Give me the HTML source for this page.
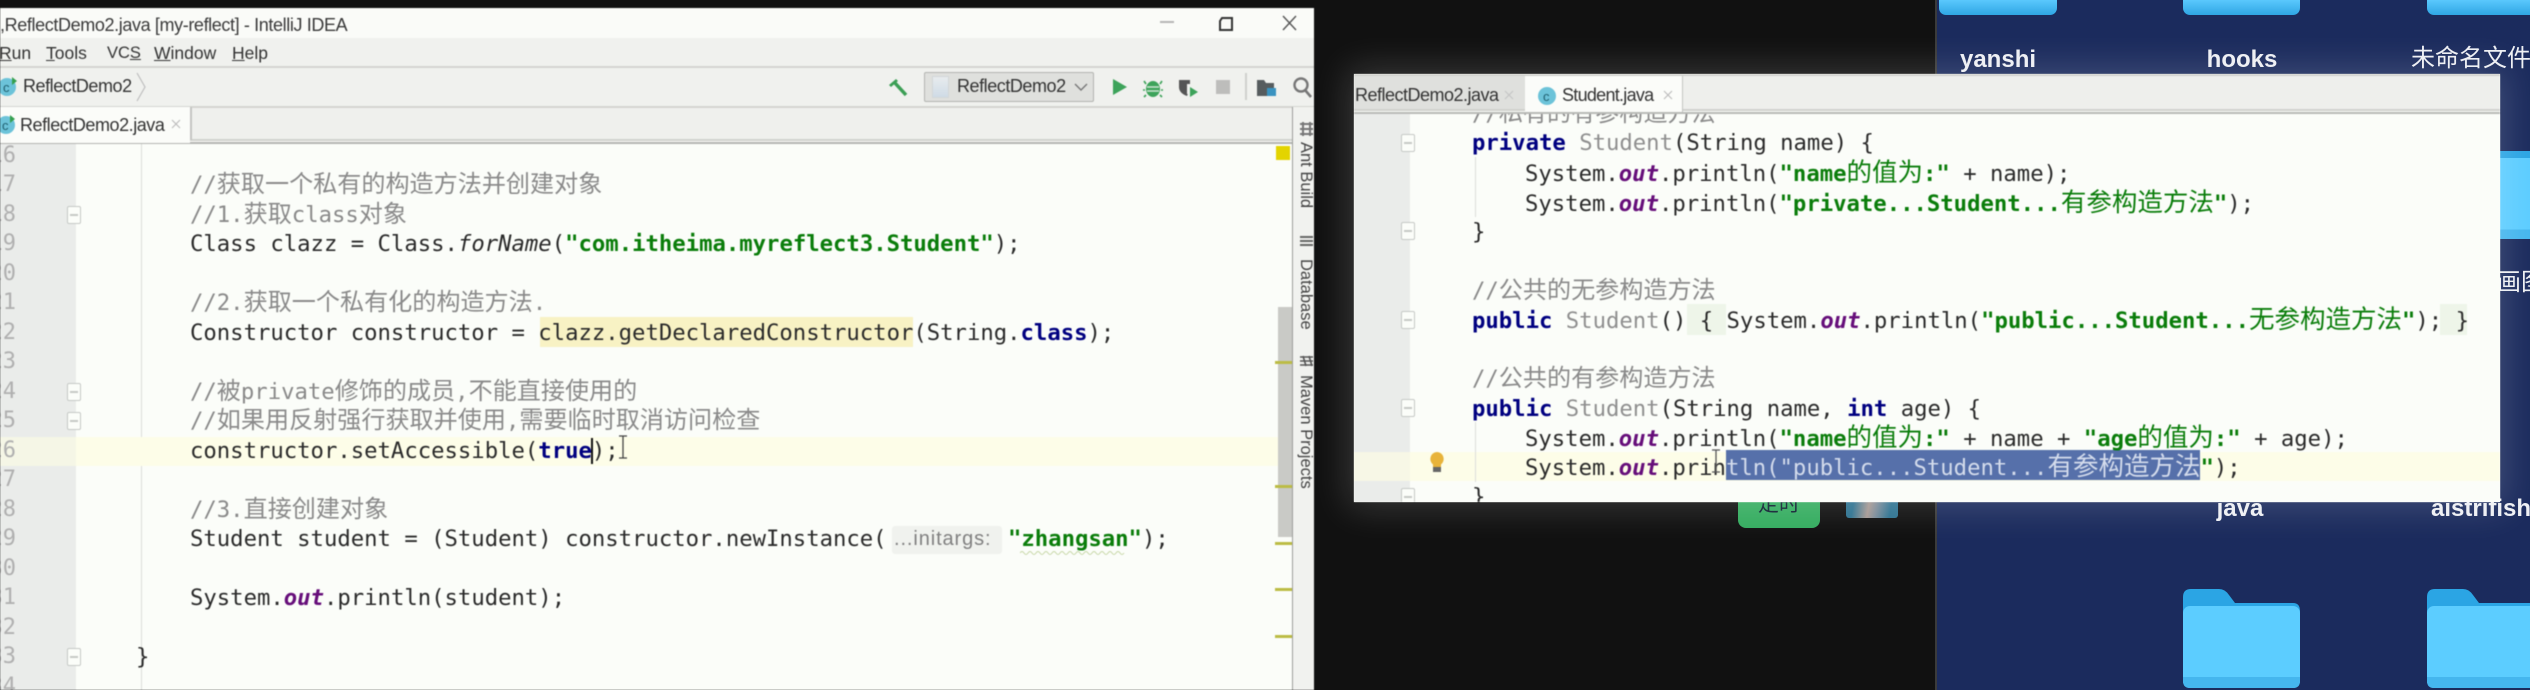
<!DOCTYPE html>
<html lang="zh"><head><meta charset="utf-8"><title>ReflectDemo2</title>
<style>
html,body{margin:0;padding:0;background:#111;width:2530px;height:690px;overflow:hidden}
*{box-sizing:border-box}
.a{position:absolute}
#stage{position:absolute;left:0;top:0;width:2530px;height:690px;overflow:hidden;background:#111}
.ui{font-family:"Liberation Sans","Noto Sans CJK SC",sans-serif;color:#333;white-space:pre}
.l{position:absolute;white-space:pre;height:30px;line-height:30px;font-family:"DejaVu Sans Mono","Noto Sans CJK SC",monospace;font-size:22.26px;color:#2a2a2a}
.l i.z,.z{font-family:"Noto Sans CJK SC",sans-serif;font-size:25.5px;line-height:1;font-style:normal;font-weight:normal}
.l.cm i.z{font-size:24.1px}
.cm{color:#8a8a8a}
.k{color:#000080;font-weight:bold}
.s{color:#0a7d0a;font-weight:bold}
.o{color:#660e7a;font-weight:bold;font-style:italic}
.g{color:#8f8f8f}
.it{font-style:italic}
.n{position:absolute;left:-24px;width:40px;text-align:right;height:30px;line-height:30px;font-family:"DejaVu Sans Mono",monospace;font-size:22px;color:#b0b0b0}
.f{position:absolute;width:14px;height:18px;border:1.5px solid #c6c9c6;background:#fbfdf9;border-radius:2px}
.f:after{content:"";position:absolute;left:2px;right:2px;top:7px;height:1.5px;background:#c6c9c6}
.lbl{position:absolute;font-family:"Liberation Sans","Noto Sans CJK SC",sans-serif;font-weight:bold;font-size:24px;color:#eef0f4;white-space:pre;line-height:30px}
.rot{position:absolute;writing-mode:vertical-rl;font-family:"Liberation Sans",sans-serif;font-size:16.5px;color:#444;white-space:pre;line-height:18px}
.mk{position:absolute;left:1275px;width:17px;height:3px;background:#bcbc45}
</style></head>
<body><div id="stage">

<!-- desktop -->
<div class="a" style="left:1935px;top:0;width:2px;height:690px;background:#3b3b3b"></div>
<div class="a" style="left:1937px;top:0;width:593px;height:690px;background:#1b2b5d"></div>

<div class="a" style="left:1939px;top:0;width:118px;height:15px;background:linear-gradient(#5ac8fd,#2fa6e4);border-radius:0 0 7px 7px"></div>
<div class="a" style="left:2183px;top:0;width:117px;height:15px;background:linear-gradient(#5ac8fd,#2fa6e4);border-radius:0 0 7px 7px"></div>
<div class="a" style="left:2427px;top:0;width:103px;height:15px;background:linear-gradient(#5ac8fd,#2fa6e4);border-radius:0 0 0 7px"></div>
<div class="lbl" style="left:1959px;top:45px;width:78px;text-align:center">yanshi</div>
<div class="lbl" style="left:2200px;top:45px;width:84px;text-align:center">hooks</div>
<div class="lbl" style="left:2411px;top:44px;font-weight:normal">未命名文件</div>

<div class="a" style="left:2480px;top:151px;width:50px;height:88px;background:#2ba5e4;border-radius:6px 0 0 6px"></div>
<div class="a" style="left:2480px;top:158px;width:50px;height:81px;background:linear-gradient(#5ccdff 88%,#45b6ee 88%);border-radius:6px 0 0 6px"></div>
<div class="lbl" style="left:2497px;top:268px;font-weight:normal">画图</div>

<div class="lbl" style="left:2200px;top:494px;width:80px;text-align:center">java</div>
<div class="lbl" style="left:2431px;top:494px">aistrifish</div>

<svg class="a" style="left:2183px;top:589px" width="117" height="100" viewBox="0 0 117 100">
<path d="M0 8Q0 0 8 0H36Q42 0 46 6L52 14H110Q117 14 117 22V60H0Z" fill="#2ba5e4"/>
<rect x="0" y="17" width="117" height="82" rx="7" fill="#5ccdff"/>
<path d="M0 88H117V92Q117 99 110 99H7Q0 99 0 92Z" fill="#45b6ee"/></svg>
<svg class="a" style="left:2427px;top:589px" width="117" height="100" viewBox="0 0 117 100">
<path d="M0 8Q0 0 8 0H36Q42 0 46 6L52 14H110Q117 14 117 22V60H0Z" fill="#2ba5e4"/>
<rect x="0" y="17" width="117" height="82" rx="7" fill="#5ccdff"/>
<path d="M0 88H117V92Q117 99 110 99H7Q0 99 0 92Z" fill="#45b6ee"/></svg>

<div class="a" style="left:1738px;top:470px;width:82px;height:58px;background:#35ad60;border-radius:8px"></div>
<div class="a ui" style="left:1758px;top:488px;font-size:21px;color:#123;font-family:'Noto Sans CJK SC',sans-serif">定时</div>
<div class="a" style="left:1846px;top:470px;width:52px;height:48px;background:linear-gradient(100deg,#2f7391 22%,#a89a94 48%,#7d8d9a 62%,#2f7391 85%);border-radius:3px"></div>

<!-- window 1 -->
<div class="a" id="w1" style="left:0;top:8px;width:1314px;height:682px;background:#fbfdf9;overflow:hidden;filter:blur(.65px)">
 <div style="position:absolute;left:0;top:-8px;width:1314px;height:690px">
 <div class="a" style="left:0;top:8px;width:1314px;height:30px;background:#fafbf8"></div>
 <div class="a" style="left:0;top:38px;width:1314px;height:28px;background:#f0f1ee"></div>
 <div class="a" style="left:0;top:66px;width:1314px;height:2px;background:#d4d5d1"></div>
 <div class="a" style="left:0;top:68px;width:1314px;height:38px;background:#f0f1ee"></div>
 <div class="a" style="left:0;top:106px;width:1314px;height:2px;background:#d4d5d1"></div>
 <div class="a" style="left:0;top:108px;width:1292px;height:32px;background:#eff0ed"></div>
 <div class="a" style="left:0;top:139px;width:1292px;height:2px;background:#d0d1cd"></div>
 <div class="a" style="left:0;top:142px;width:1292px;height:2px;background:#b4b5b2"></div>
 <div class="a" style="left:0;top:107px;width:190px;height:36px;background:#fbfcf9"></div>
 <div class="a" style="left:190px;top:107px;width:1.5px;height:33px;background:#c4c5c2"></div>

 <div class="a ui" style="left:0;top:13px;font-size:18px;line-height:24px;color:#3a3a3a;letter-spacing:-.38px">,ReflectDemo2.java [my-reflect] - IntelliJ IDEA</div>
 <div class="a ui" style="left:-1px;top:41px;font-size:17.5px;line-height:24px"><u>R</u>un</div>
 <div class="a ui" style="left:46px;top:41px;font-size:17.5px;line-height:24px"><u>T</u>ools</div>
 <div class="a ui" style="left:107px;top:41px;font-size:16.5px;line-height:24px">VC<u>S</u></div>
 <div class="a ui" style="left:154px;top:41px;font-size:17.5px;line-height:24px"><u>W</u>indow</div>
 <div class="a ui" style="left:232px;top:41px;font-size:17.5px;line-height:24px"><u>H</u>elp</div>

 <svg class="a" style="left:1155px;top:10px" width="150" height="26" viewBox="0 0 150 26">
 <rect x="5" y="11" width="14" height="2" fill="#b5b5b5"/>
 <path d="M67 8h10v12h-12v-9z M67 8l-2 3" fill="none" stroke="#333" stroke-width="2"/>
 <path d="M128 6l13 14M141 6l-13 14" stroke="#555" stroke-width="1.4" fill="none"/></svg>

 <svg class="a" style="left:0;top:75px" width="20" height="22" viewBox="0 0 20 22"><circle cx="7" cy="12" r="9" fill="#6cc3d9"/><text x="3" y="17" font-family="Liberation Sans" font-size="13" fill="#1f5f6f">c</text><path d="M12 2l5 4-5 4z" fill="#35a04f"/></svg>
 <div class="a ui" style="left:23px;top:74px;font-size:18px;line-height:24px;letter-spacing:-.45px">ReflectDemo2</div>
 <svg class="a" style="left:136px;top:72px" width="12" height="30" viewBox="0 0 12 30"><path d="M1 1l8 14-8 14" fill="none" stroke="#bfbfbf" stroke-width="1.2"/></svg>

 <svg class="a" style="left:886px;top:76px" width="24" height="22" viewBox="0 0 24 22"><path d="M3 9L10 3l2 2-7 6z" fill="#3c9f55"/><path d="M9 7l11 12" stroke="#3c9f55" stroke-width="3.5"/></svg>
 <div class="a" style="left:924px;top:72px;width:170px;height:30px;background:#dfe0dd;border:1.5px solid #b3b4b1;border-radius:2px"></div>
 <div class="a" style="left:932px;top:76px;width:17px;height:22px;background:linear-gradient(#e8ecee,#cfdbe6);border:1px solid #d2d6d8"></div>
 <div class="a ui" style="left:957px;top:74px;font-size:18px;line-height:24px;letter-spacing:-.45px">ReflectDemo2</div>
 <svg class="a" style="left:1074px;top:83px" width="14" height="9" viewBox="0 0 14 9"><path d="M1 1l6 6 6-6" fill="none" stroke="#777" stroke-width="1.4"/></svg>
 <svg class="a" style="left:1112px;top:78px" width="16" height="18" viewBox="0 0 16 18"><path d="M1 1l14 8-14 8z" fill="#3da35a"/></svg>
 <svg class="a" style="left:1143px;top:76px" width="20" height="22" viewBox="0 0 20 22"><ellipse cx="10" cy="13" rx="7" ry="8" fill="#3da35a"/><path d="M3 8L1 5M17 8l2-3M2 14H0M18 14h2M3 19l-2 2M17 19l2 2" stroke="#3da35a" stroke-width="1.6"/><path d="M4 11h12M4 15h12" stroke="#cfe6d3" stroke-width="1.4"/></svg>
 <svg class="a" style="left:1176px;top:77px" width="24" height="22" viewBox="0 0 24 22"><path d="M3 3h11v9l-3 7q-8-3-8-9z" fill="#555"/><path d="M11 7h3v10h-3z" fill="#f0f1ee"/><path d="M14 10l8 5-8 5z" fill="#3da35a"/></svg>
 <div class="a" style="left:1216px;top:80px;width:14px;height:14px;background:#bdbdbb"></div>
 <div class="a" style="left:1245px;top:73px;width:1.5px;height:27px;background:#cfd0cd"></div>
 <svg class="a" style="left:1257px;top:78px" width="20" height="19" viewBox="0 0 20 19"><path d="M0 2h7l2 3h8v13H0z" fill="#565c5e"/><rect x="10" y="10" width="9" height="8" fill="#3a93c0"/></svg>
 <svg class="a" style="left:1293px;top:76px" width="20" height="22" viewBox="0 0 20 22"><circle cx="8" cy="9" r="6.5" fill="none" stroke="#777" stroke-width="2.4"/><path d="M12 14l6 7" stroke="#777" stroke-width="2.6"/></svg>

 <svg class="a" style="left:0;top:113px" width="20" height="22" viewBox="0 0 20 22"><circle cx="6" cy="12" r="9" fill="#6cc3d9"/><text x="2" y="17" font-family="Liberation Sans" font-size="13" fill="#1f5f6f">c</text><path d="M10 2l5 4-5 4z" fill="#35a04f"/></svg>
 <div class="a ui" style="left:20px;top:113px;font-size:18px;line-height:24px;letter-spacing:-.45px">ReflectDemo2.java</div>
 <svg class="a" style="left:171px;top:119px" width="10" height="10" viewBox="0 0 10 10"><path d="M1 1l8 8M9 1L1 9" stroke="#bbb" stroke-width="1.1"/></svg>

 <!-- editor -->
 <div class="a" style="left:0;top:144px;width:76px;height:546px;background:#eaecea"></div>
 <div class="a" style="left:141px;top:144px;width:1.2px;height:546px;background:#dcdedb"></div>
 <div class="a" style="left:0;top:437px;width:1292px;height:29px;background:#fdfde8"></div>
 <div class="a" style="left:0;top:437px;width:76px;height:29px;background:#f5f6e6"></div>
 <div class="a" style="left:540px;top:317px;width:373px;height:30px;background:#f8f2c4"></div>

 <div class="n" style="top:141px">16</div><div class="n" style="top:170px">17</div><div class="n" style="top:200px">18</div><div class="n" style="top:229px">19</div><div class="n" style="top:259px">20</div><div class="n" style="top:288px">21</div><div class="n" style="top:318px">22</div><div class="n" style="top:347px">23</div><div class="n" style="top:377px">24</div><div class="n" style="top:406px">25</div><div class="n" style="top:436px">26</div><div class="n" style="top:465px">27</div><div class="n" style="top:495px">28</div><div class="n" style="top:524px">29</div><div class="n" style="top:554px">30</div><div class="n" style="top:583px">31</div><div class="n" style="top:613px">32</div><div class="n" style="top:642px">33</div><div class="n" style="top:672px">34</div>

 <div class="f" style="left:67px;top:206px"></div>
 <div class="f" style="left:67px;top:383px"></div>
 <div class="f" style="left:67px;top:412px"></div>
 <div class="f" style="left:67px;top:648px"></div>

 <div class="l cm" style="left:190px;top:170px">//<i class="z">获取一个私有的构造方法并创建对象</i></div>
 <div class="l cm" style="left:190px;top:200px">//1.<i class="z">获取</i>class<i class="z">对象</i></div>
 <div class="l" style="left:190px;top:229px">Class clazz = Class.<span class="it">forName</span>(<span class="s">"com.itheima.myreflect3.Student"</span>);</div>
 <div class="l cm" style="left:190px;top:288px">//2.<i class="z">获取一个私有化的构造方法</i>.</div>
 <div class="l" style="left:190px;top:318px">Constructor constructor = clazz.getDeclaredConstructor(String.<span class="k">class</span>);</div>
 <div class="l cm" style="left:190px;top:377px">//<i class="z">被</i>private<i class="z">修饰的成员</i>,<i class="z">不能直接使用的</i></div>
 <div class="l cm" style="left:190px;top:406px">//<i class="z">如果用反射强行获取并使用</i>,<i class="z">需要临时取消访问检查</i></div>
 <div class="l" style="left:190px;top:436px">constructor.setAccessible(<span class="k">true</span>);</div>
 <div class="a" style="left:591px;top:438px;width:2px;height:26px;background:#111"></div>
 <svg class="a" style="left:617px;top:434px" width="12" height="26" viewBox="0 0 12 26"><path d="M2 2h8M6 2v22M2 24h8" stroke="#444" stroke-width="1.3" fill="none"/></svg>
 <div class="l cm" style="left:190px;top:495px">//3.<i class="z">直接创建对象</i></div>
 <div class="l" style="left:190px;top:524px">Student student = (Student) constructor.newInstance(</div>
 <div class="a ui" style="left:892px;top:526px;width:110px;height:28px;background:#f0f2ee;border-radius:3px;font-size:20px;letter-spacing:.9px;line-height:27px;color:#808080;padding-left:2px">...initargs:</div>
 <div class="l" style="left:1008px;top:524px"><span class="s">"zhangsan"</span>);</div>
 <svg class="a" style="left:1020px;top:551px" width="110" height="4" viewBox="0 0 110 4"><path d="M0 2q2-3 4 0t4 0 4 0 4 0 4 0 4 0 4 0 4 0 4 0 4 0 4 0 4 0 4 0 4 0 4 0 4 0 4 0 4 0 4 0 4 0 4 0 4 0 4 0 4 0 4 0 4 0" fill="none" stroke="#c8d8a8" stroke-width="1"/></svg>
 <div class="l" style="left:190px;top:583px">System.<span class="o">out</span>.println(student);</div>
 <div class="l" style="left:136px;top:642px">}</div>

 <!-- scrollbar + tool strip -->
 <div class="a" style="left:1278px;top:307px;width:14px;height:230px;background:#c9cac6"></div>
 <div class="a" style="left:1276px;top:146px;width:14px;height:14px;background:#e3d400"></div>
 <div class="mk" style="top:361px"></div><div class="mk" style="top:485px"></div><div class="mk" style="top:542px"></div><div class="mk" style="top:588px"></div><div class="mk" style="top:635px"></div>
 <div class="a" style="left:1292px;top:107px;width:22px;height:583px;background:#f1f2ef;border-left:1.5px solid #9d9e9b"></div>
 <div class="rot" style="left:1297px;top:142px">Ant Build</div>
 <div class="rot" style="left:1297px;top:259px">Database</div>
 <div class="rot" style="left:1297px;top:375px">Maven Projects</div>
 <svg class="a" style="left:1299px;top:121px" width="15" height="16" viewBox="0 0 15 16"><path d="M1 3h13M1 8h13M1 13h13M4 1v14M11 1v14" stroke="#777" stroke-width="2"/></svg>
 <svg class="a" style="left:1299px;top:235px" width="15" height="12" viewBox="0 0 15 12"><path d="M1 2h13M1 6h13M1 10h13" stroke="#666" stroke-width="2"/></svg>
 <svg class="a" style="left:1299px;top:355px" width="15" height="12" viewBox="0 0 15 12"><path d="M1 2h13M1 6h13M1 10h13" stroke="#555" stroke-width="1.6"/><path d="M4 1l3 10M10 1l3 10" stroke="#555" stroke-width="1.6"/></svg>
 </div>
</div>

<!-- window 2 -->
<div class="a" style="left:1354px;top:74px;width:1146px;height:428px;box-shadow:0 0 34px 6px rgba(255,255,255,.17);background:#fbfdf9"></div>
<div class="a" id="w2" style="left:1354px;top:74px;width:1146px;height:428px;background:#fbfdf9;overflow:hidden;filter:blur(.6px)">
 <div style="position:absolute;left:-1354px;top:-74px;width:2530px;height:690px">
 <div class="a" style="left:1354px;top:74px;width:1146px;height:2px;background:#d0d1cd"></div>
 <div class="a" style="left:1354px;top:76px;width:1146px;height:33px;background:#eeefec"></div>
 <div class="a" style="left:1354px;top:109px;width:1146px;height:2px;background:#d0d1cd"></div>
 <div class="a" style="left:1354px;top:112px;width:1146px;height:2px;background:#b9bab7"></div>
 <div class="a" style="left:1354px;top:76px;width:171px;height:33px;background:#dfe0dd"></div>
 <div class="a" style="left:1525px;top:76px;width:158px;height:36px;background:#fbfcf9;border-right:1.5px solid #c4c5c2"></div>
 <div class="a ui" style="left:1355px;top:83px;font-size:18px;line-height:24px;letter-spacing:-.5px">ReflectDemo2.java</div>
 <svg class="a" style="left:1504px;top:90px" width="10" height="10" viewBox="0 0 10 10"><path d="M1 1l8 8M9 1L1 9" stroke="#c4c4c4" stroke-width="1.1"/></svg>
 <svg class="a" style="left:1537px;top:86px" width="20" height="20" viewBox="0 0 20 20"><circle cx="10" cy="10" r="9" fill="#6cc3d9"/><text x="6" y="15" font-family="Liberation Sans" font-size="13" fill="#1f5f6f">c</text></svg>
 <div class="a ui" style="left:1562px;top:83px;font-size:18px;line-height:24px;letter-spacing:-.72px">Student.java</div>
 <svg class="a" style="left:1663px;top:90px" width="10" height="10" viewBox="0 0 10 10"><path d="M1 1l8 8M9 1L1 9" stroke="#bbb" stroke-width="1.1"/></svg>

 <div class="a" style="left:1354px;top:114px;width:56px;height:388px;background:#eaecea"></div>
 <div class="a" style="left:1354px;top:452px;width:1146px;height:29px;background:#fdfde8"></div>
 <div class="a" style="left:1354px;top:452px;width:56px;height:29px;background:#f7f7e6"></div>
 <div class="a" style="left:1687px;top:304px;width:39px;height:31px;background:#eef5e9"></div>
 <div class="a" style="left:2440px;top:304px;width:27px;height:31px;background:#eef5e9"></div>
 <div class="a" style="left:1475px;top:157px;width:1.2px;height:60px;background:#dcdedb"></div>
 <div class="a" style="left:1475px;top:422px;width:1.2px;height:60px;background:#dcdedb"></div>
 <div class="a" style="left:1726px;top:450px;width:474px;height:30px;background:#5670aa"></div>

 <div class="f" style="left:1401px;top:134px"></div>
 <div class="f" style="left:1401px;top:222px"></div>
 <div class="f" style="left:1401px;top:311px"></div>
 <div class="f" style="left:1401px;top:399px"></div>
 <div class="f" style="left:1401px;top:488px"></div>

 <div class="l cm" style="left:1472px;top:99px;clip-path:inset(15px 0 -5px 0)">//<i class="z">私有的有参构造方法</i></div>
 <div class="l" style="left:1472px;top:128px"><span class="k">private</span> <span class="g">Student</span>(String name) {</div>
 <div class="l" style="left:1525px;top:158px">System.<span class="o">out</span>.println(<span class="s">"name<i class="z">的值为</i>:"</span> + name);</div>
 <div class="l" style="left:1525px;top:188px">System.<span class="o">out</span>.println(<span class="s">"private...Student...<i class="z">有参构造方法</i>"</span>);</div>
 <div class="l" style="left:1472px;top:217px">}</div>
 <div class="l cm" style="left:1472px;top:276px">//<i class="z">公共的无参构造方法</i></div>
 <div class="l" style="left:1472px;top:305px"><span class="k">public</span> <span class="g">Student</span>() { System.<span class="o">out</span>.println(<span class="s">"public...Student...<i class="z">无参构造方法</i>"</span>); }</div>
 <div class="l cm" style="left:1472px;top:364px">//<i class="z">公共的有参构造方法</i></div>
 <div class="l" style="left:1472px;top:394px"><span class="k">public</span> <span class="g">Student</span>(String name, <span class="k">int</span> age) {</div>
 <div class="l" style="left:1525px;top:423px">System.<span class="o">out</span>.println(<span class="s">"name<i class="z">的值为</i>:"</span> + name + <span class="s">"age<i class="z">的值为</i>:"</span> + age);</div>
 <div class="l" style="left:1525px;top:452px">System.<span class="o">out</span>.prin<span style="color:#d4dcec">tln("public...Student...<i class="z">有参构造方法</i></span><span class="s">"</span>);</div>
 <div class="l" style="left:1472px;top:482px">}</div>
 <svg class="a" style="left:1710px;top:448px" width="12" height="26" viewBox="0 0 12 26"><path d="M2 2h8M6 2v22M2 24h8" stroke="#555" stroke-width="1.3" fill="none"/></svg>
 <svg class="a" style="left:1429px;top:451px" width="16" height="22" viewBox="0 0 16 22"><path d="M8 1a7 7 0 0 0-4 12.500V16h8v-2.500A7 7 0 0 0 8 1z" fill="#e8b33a"/><rect x="4" y="16" width="8" height="5" fill="#666"/></svg>
 </div>
</div>

</div></body></html>
